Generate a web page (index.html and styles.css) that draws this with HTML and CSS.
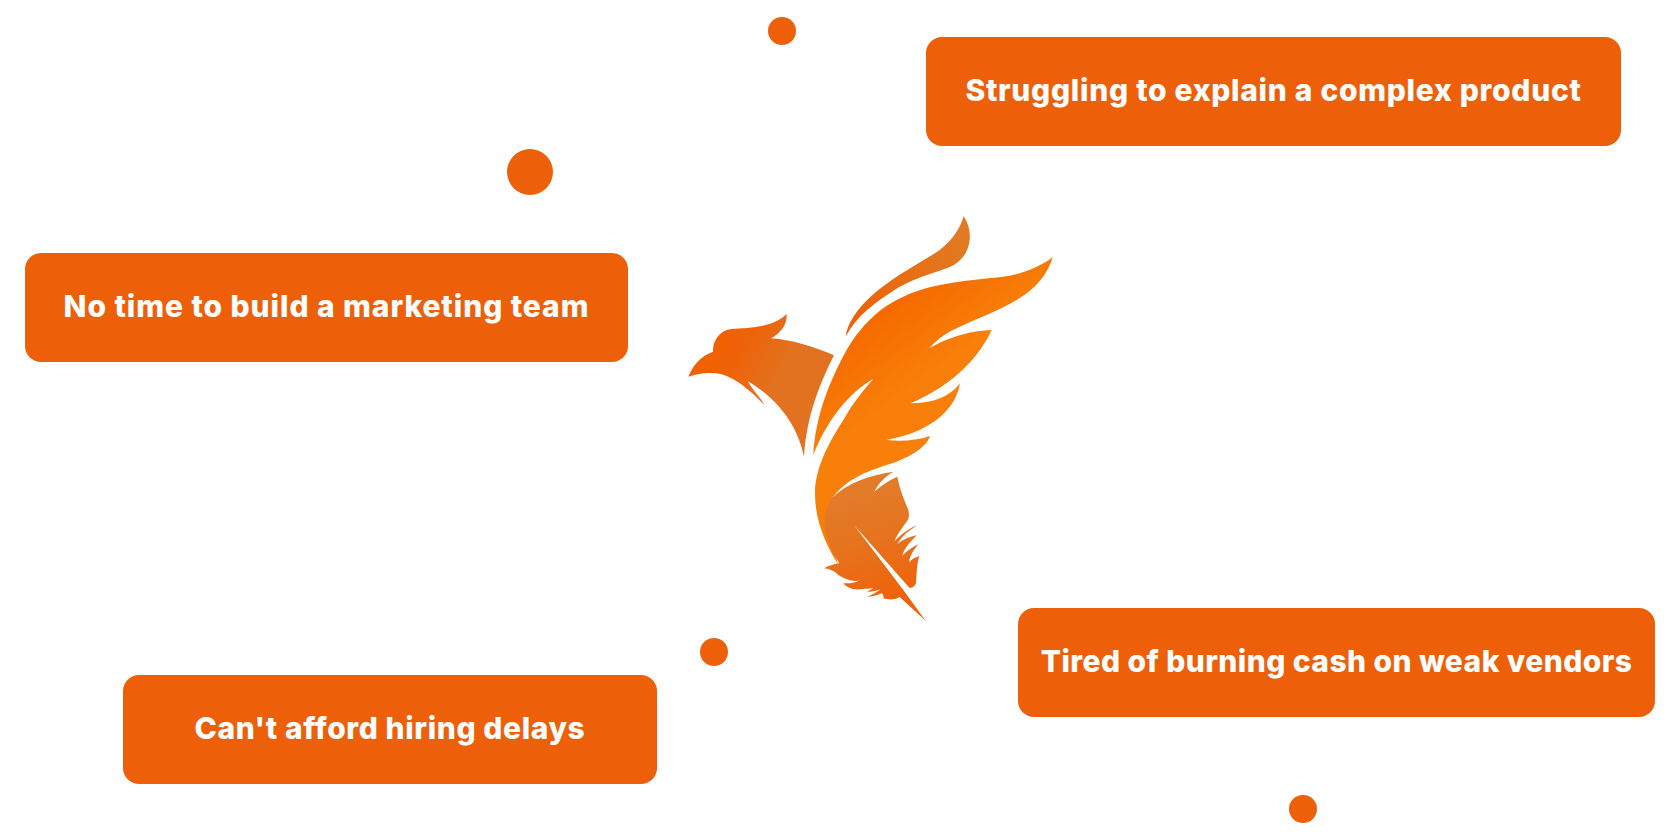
FILE: index.html
```html
<!DOCTYPE html>
<html lang="en">
<head>
<meta charset="utf-8">
<title>Pain points</title>
<link rel="stylesheet" href="styles.css">
</head>
<body>
<main class="canvas">
  <span class="dot dot-top"></span>
  <span class="dot dot-large"></span>
  <span class="dot dot-mid"></span>
  <span class="dot dot-bottom"></span>

  <div class="card card-complex">Struggling to explain a complex product</div>
  <div class="card card-team">No time to build a marketing team</div>
  <div class="card card-hiring">Can't afford hiring delays</div>
  <div class="card card-vendors">Tired of burning cash on weak vendors</div>

  <svg class="phoenix" viewBox="680 210 380 420" aria-hidden="true">
    <defs>
      <linearGradient id="gHead" gradientUnits="userSpaceOnUse" x1="90" y1="420" x2="380" y2="580">
        <stop offset="0" stop-color="#f26000"/><stop offset=".35" stop-color="#ef6208"/><stop offset=".8" stop-color="#e2721f"/><stop offset="1" stop-color="#e2721f"/>
      </linearGradient>
      <linearGradient id="gFlame" gradientUnits="userSpaceOnUse" x1="560" y1="340" x2="880" y2="130">
        <stop offset="0" stop-color="#ee6208"/><stop offset="1" stop-color="#e17a22"/>
      </linearGradient>
      <linearGradient id="gWing" gradientUnits="userSpaceOnUse" x1="500" y1="340" x2="690" y2="600">
        <stop offset="0" stop-color="#f26500"/><stop offset=".35" stop-color="#f66d00"/><stop offset="1" stop-color="#f8800a"/>
      </linearGradient>
      <linearGradient id="gFeather" gradientUnits="userSpaceOnUse" x1="230" y1="190" x2="340" y2="540">
        <stop offset="0" stop-color="#e27c2a"/><stop offset=".45" stop-color="#e6741f"/><stop offset="1" stop-color="#f0620a"/>
      </linearGradient>
    </defs>
    <g transform="translate(670 200) scale(.33333)">
      <path fill="url(#gHead)" d="M55 530 C70 495 90 470 129 455 C128 420 150 392 182 387 C240 384 310 382 350 342 C352 375 330 400 303 415 C370 420 430 440 492 466 C455 540 410 640 402 771 C388 700 345 610 234 544 C250 575 270 590 285 617 C250 580 200 535 155 523 C120 515 85 520 55 530 Z"/>
      <path fill="url(#gFlame)" d="M881 48 C895 70 902 95 899 120 C895 160 870 190 830 205 C780 222 720 240 670 272 C620 305 560 345 527 410 C532 370 560 330 600 292 C650 245 720 205 790 163 C835 135 868 95 881 48 Z"/>
      <path fill="url(#gWing)" d="M1148 172 C1135 220 1095 270 1040 300 C980 335 910 360 860 385 C825 400 795 425 778 445 C820 420 890 392 965 390 C930 465 860 550 722 610 C790 610 840 590 870 550 C860 610 810 690 650 720 C690 725 740 722 780 708 C770 740 725 768 680 785 C620 805 540 825 490 890 L470 950 L480 1020 L505 1095 C465 1030 435 960 435 880 C435 815 465 745 520 660 C545 615 575 575 610 537 C540 575 470 660 430 765 C435 650 480 540 530 450 C570 380 630 320 700 290 C780 250 900 240 1000 230 C1060 222 1110 200 1148 172 Z"/>
    </g>
    <g transform="translate(780 420) scale(.33333)">
      <path fill="url(#gFeather)" d="M340 155 C315 170 295 190 283 215 C305 195 330 180 352 170 C358 205 375 245 385 270 C388 285 388 295 380 305 C365 325 350 345 343 365 C365 340 390 325 410 316 C395 330 375 335 352 372 C370 358 390 350 410 346 C395 362 375 380 367 407 C380 392 400 380 415 373 C400 392 390 405 387 427 C395 418 405 412 418 408 C410 430 410 465 408 490 C404 500 396 505 388 503 L222 315 L370 510 L437 602 L358 530 C350 540 325 540 310 535 C312 528 310 525 305 520 C290 527 275 530 262 530 C275 525 290 518 302 508 C290 512 275 516 262 515 C270 510 275 508 280 505 C260 505 240 510 222 508 C210 505 195 498 190 490 C205 490 225 490 240 480 C220 487 200 480 175 465 C160 450 145 447 132 445 C145 438 160 432 178 430 C155 395 135 350 133 310 C132 280 145 245 160 230 C200 190 270 165 340 155 Z"/>
    </g>
  </svg>
</main>
</body>
</html>
```

FILE: styles.css
```css
html, body {
  margin: 0;
  padding: 0;
  background: #fff;
}

.canvas {
  position: relative;
  width: 1680px;
  height: 840px;
  overflow: hidden;
  font-family: "Inter", "Liberation Sans", sans-serif;
}

.dot {
  position: absolute;
  width: 28px;
  height: 28px;
  border-radius: 50%;
  background: #ee5f09;
}

.dot-top { left: 768px; top: 17px; }
.dot-large { left: 507px; top: 149px; width: 46px; height: 46px; }
.dot-mid { left: 700px; top: 638px; }
.dot-bottom { left: 1289px; top: 795px; }

.card {
  position: absolute;
  display: flex;
  align-items: center;
  justify-content: center;
  box-sizing: border-box;
  height: 109px;
  padding-bottom: 4px;
  border-radius: 16px;
  background: #ee5f09;
  color: #fff;
  font-size: 30px;
  font-weight: 800;
  letter-spacing: 0.6px;
  white-space: nowrap;
}

.card-complex { left: 926px; top: 37px; width: 695px; letter-spacing: 0.7px; }
.card-team { left: 25px; top: 253px; width: 603px; letter-spacing: 0.93px; }
.card-hiring { left: 123px; top: 675px; width: 534px; }
.card-vendors { left: 1018px; top: 608px; width: 637px; letter-spacing: 0.42px; }

.phoenix {
  position: absolute;
  left: 680px;
  top: 210px;
  width: 380px;
  height: 420px;
}
```
